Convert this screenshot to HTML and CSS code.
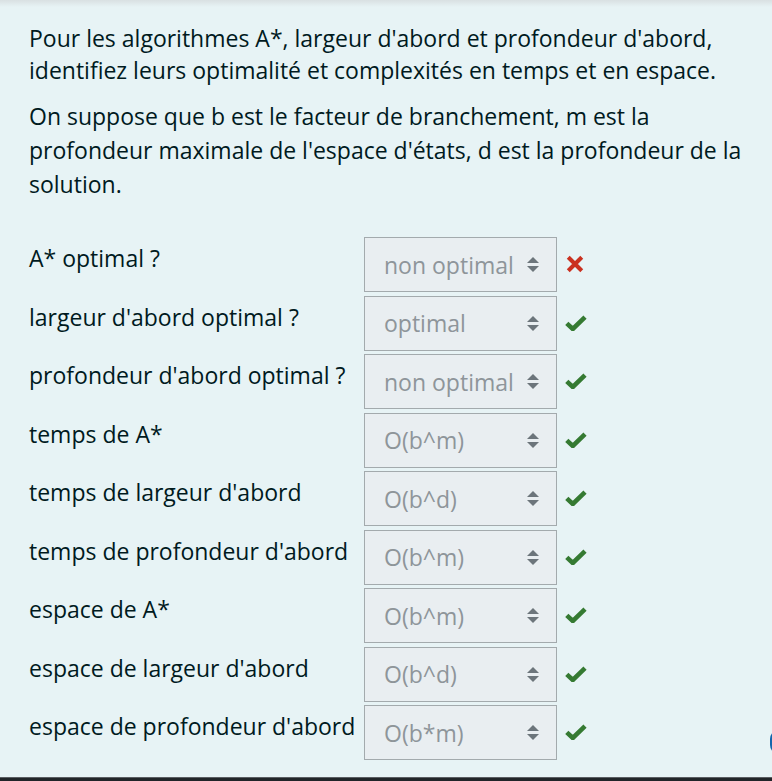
FILE: index.html
```html
<!DOCTYPE html>
<html lang="fr">
<head>
<meta charset="utf-8">
<title>Question</title>
<link rel="stylesheet" href="styles.css">
</head>
<body>
<div class="formulation">
  <div class="qtext">
    <p class="p1">Pour les algorithmes A*, largeur d'abord et profondeur d'abord, identifiez leurs optimalité et complexités en temps et en espace.</p>
    <p class="p2">On suppose que b est le facteur de branchement, m est la profondeur maximale de l'espace d'états, d est la profondeur de la solution.</p>
  </div>
  <div class="answer">
    <div class="row"><div class="label">A* optimal ?</div><div class="select"><span>non optimal</span><span class="arr"></span></div><div class="mark bad"><svg viewBox="0 0 20 20" width="18" height="18"><path d="M2.5 2.5 L17.5 17.5 M17.5 2.5 L2.5 17.5" stroke="#ca3120" stroke-width="4.6" stroke-linecap="butt"/></svg></div></div>
    <div class="row"><div class="label">largeur d'abord optimal ?</div><div class="select"><span>optimal</span><span class="arr"></span></div><div class="mark"><svg viewBox="0 0 22 16" width="22" height="16"><path d="M1.8 8.3 L7.8 14 L20 2.2" fill="none" stroke="#357a32" stroke-width="4.6"/></svg></div></div>
    <div class="row"><div class="label">profondeur d'abord optimal ?</div><div class="select"><span>non optimal</span><span class="arr"></span></div><div class="mark"><svg viewBox="0 0 22 16" width="22" height="16"><path d="M1.8 8.3 L7.8 14 L20 2.2" fill="none" stroke="#357a32" stroke-width="4.6"/></svg></div></div>
    <div class="row"><div class="label">temps de A*</div><div class="select"><span>O(b^m)</span><span class="arr"></span></div><div class="mark"><svg viewBox="0 0 22 16" width="22" height="16"><path d="M1.8 8.3 L7.8 14 L20 2.2" fill="none" stroke="#357a32" stroke-width="4.6"/></svg></div></div>
    <div class="row"><div class="label">temps de largeur d'abord</div><div class="select"><span>O(b^d)</span><span class="arr"></span></div><div class="mark"><svg viewBox="0 0 22 16" width="22" height="16"><path d="M1.8 8.3 L7.8 14 L20 2.2" fill="none" stroke="#357a32" stroke-width="4.6"/></svg></div></div>
    <div class="row"><div class="label">temps de profondeur d'abord</div><div class="select"><span>O(b^m)</span><span class="arr"></span></div><div class="mark"><svg viewBox="0 0 22 16" width="22" height="16"><path d="M1.8 8.3 L7.8 14 L20 2.2" fill="none" stroke="#357a32" stroke-width="4.6"/></svg></div></div>
    <div class="row"><div class="label">espace de A*</div><div class="select"><span>O(b^m)</span><span class="arr"></span></div><div class="mark"><svg viewBox="0 0 22 16" width="22" height="16"><path d="M1.8 8.3 L7.8 14 L20 2.2" fill="none" stroke="#357a32" stroke-width="4.6"/></svg></div></div>
    <div class="row"><div class="label">espace de largeur d'abord</div><div class="select"><span>O(b^d)</span><span class="arr"></span></div><div class="mark"><svg viewBox="0 0 22 16" width="22" height="16"><path d="M1.8 8.3 L7.8 14 L20 2.2" fill="none" stroke="#357a32" stroke-width="4.6"/></svg></div></div>
    <div class="row"><div class="label">espace de profondeur d'abord</div><div class="select"><span>O(b*m)</span><span class="arr"></span></div><div class="mark"><svg viewBox="0 0 22 16" width="22" height="16"><path d="M1.8 8.3 L7.8 14 L20 2.2" fill="none" stroke="#357a32" stroke-width="4.6"/></svg></div></div>
  </div>
  <div class="blob"></div>
</div>
<div class="footer"></div>
</body>
</html>
```
FILE: styles.css
```css
html, body {
  margin: 0;
  padding: 0;
  height: 100%;
  overflow: hidden;
  background: #e7f3f5;
}
body {
  font-family: "Open Sans", "Liberation Sans", sans-serif;
  font-size: 23px;
  color: #001a1e;
  display: flex;
  flex-direction: column;
}
.formulation {
  position: relative;
  flex: 1;
  background: linear-gradient(#d9e0e2 0px, #e7f3f5 7px);
  padding: 22px 24px 0 29px;
}
.qtext p {
  margin: 0;
}
.p1 {
  line-height: 32px;
  margin-bottom: 13px !important;
}
.p2 {
  line-height: 34px;
}
.answer {
  margin-top: 35px;
}
.row {
  display: flex;
  align-items: flex-start;
  height: 58.5px;
}
.label {
  width: 335px;
  line-height: 34px;
  padding-top: 5px;
  white-space: nowrap;
}
.select {
  box-sizing: border-box;
  width: 193px;
  height: 55px;
  border: 1px solid #a3aaad;
  background: #e9eef1;
  color: #8e959a;
  display: flex;
  align-items: center;
  justify-content: space-between;
  padding: 0 17px 0 19px;
  margin-top: 1px;
  flex-shrink: 0;
}
.arr {
  width: 12px;
  height: 15px;
  position: relative;
}
.arr::before, .arr::after {
  content: "";
  position: absolute;
  left: 0;
  border-left: 6px solid transparent;
  border-right: 6px solid transparent;
}
.arr::before {
  top: 0;
  border-bottom: 6px solid #6c757b;
}
.arr::after {
  bottom: 0;
  border-top: 6px solid #6c757b;
}
.mark {
  margin-left: 8px;
  height: 56px;
  display: flex;
  align-items: center;
}
.mark.bad {
  margin-left: 9px;
}
.blob {
  position: absolute;
  right: -16px;
  top: 730px;
  width: 18px;
  height: 24px;
  border-radius: 9px;
  background: #1466ac;
}
.footer {
  height: 3px;
  background: #212529;
  border-top: 1px solid #5a5e62;
}
```
